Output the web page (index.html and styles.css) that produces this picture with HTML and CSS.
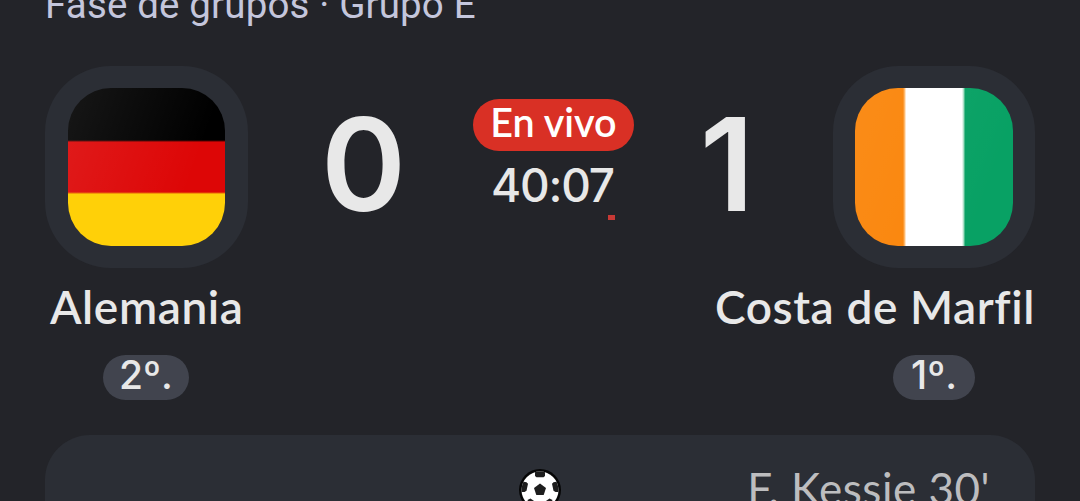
FILE: index.html
```
<!DOCTYPE html>
<html lang="es">
<head>
    <meta charset="UTF-8">
    <meta name="viewport" content="width=device-width, initial-scale=1.0">
    <title>Alemania - Costa de Marfil</title>
    <link rel="stylesheet" href="styles.css">
</head>
<body>
    <div class="stage"><span class="stage-text">Fase de grupos · Grupo E</span></div>
    <div class="match">
        <div class="flag-box"><div class="flag germany"></div></div>
        <div class="score home-score">0</div>
        <div class="status">
            <div class="live"><span class="live-text">En vivo</span></div>
            <div class="clock">40:07</div>
            <div class="tick"></div>
        </div>
        <div class="score away-score">1</div>
        <div class="flag-box"><div class="flag ivory"></div></div>
    </div>
    <div class="names">
        <span class="name home-name">Alemania</span>
        <span class="name away-name">Costa de Marfil</span>
    </div>
    <div class="ranks">
        <div class="rank-slot"><div class="rank home-rank">2º.</div></div>
        <div class="rank-slot"><div class="rank away-rank">1º.</div></div>
    </div>
    <div class="goals">
        <div class="home-goals"></div>
        <svg class="ball" viewBox="0 0 42 42">
            <clipPath id="ball-clip"><circle cx="21" cy="21" r="18.5"/></clipPath>
            <circle cx="21" cy="21" r="21" fill="#050505"/>
            <circle cx="21" cy="21" r="18.5" fill="#fff"/>
            <g fill="#1d1d1d" clip-path="url(#ball-clip)">
                <path d="M21 14.5l6 4.4-2.3 7.1h-7.4L15 18.9z"/>
                <path d="M16 1h10v6l-1.5 1.2h-7L16 7z"/>
                <path d="M1 12l6.5 1.2L9 14.7l-1.5 7-2 1.3H1z"/>
                <path d="M41 12l-6.5 1.2-1.5 1.5 1.5 7 2 1.3H41z"/>
                <path d="M8.5 31l3-1.5 5 3.5-.5 3-4 4z"/>
                <path d="M33.5 31l-3-1.5-5 3.5.5 3 4 4z"/>
            </g>
        </svg>
        <div class="away-goals"><span class="goal">F. Kessie 30'</span></div>
    </div>
</body>
</html>
```
FILE: styles.css
```
* {
    box-sizing: border-box;
}
body {
    display: flow-root;
    margin: 0;
    padding: 0 45px;
    height: 501px;
    overflow: hidden;
    background-color: #232429;
    color: #e8e8e8;
    font-family: Lato, "Open Sans", sans-serif;
    white-space: nowrap;
}
.stage {
    display: flow-root;
    height: 66px;
}
.stage-text {
    display: block;
    margin-top: -18px;
    font: 400 38.5px/46px Roboto, sans-serif;
    letter-spacing: 0.15px;
    color: #c4c6dc;
}
.match {
    display: grid;
    grid-template-columns: 203px 225px 161px 199px 202px;
    height: 202px;
}
.flag-box {
    height: 202px;
    padding: 22px 22px 22px 23px;
    border-radius: 66px;
    background-color: #2b2e35;
}
.flag {
    width: 158px;
    height: 158px;
    border-radius: 43px;
}
.germany {
    width: 157px;
    background: linear-gradient(110deg, rgba(255, 255, 255, 0.09), rgba(255, 255, 255, 0) 80%) 0 0 / 100% 105px no-repeat,
        linear-gradient(#000 0 52px, #500 53px, #dd0606 54px 104px, #e86004 105px, #ffd008 106px);
}
.ivory {
    margin-left: -1px;
    background: linear-gradient(110deg, rgba(255, 255, 255, 0.06), rgba(255, 255, 255, 0) 80%),
        linear-gradient(90deg, #fa850a 0 48px, #ffc687 50px, #fff 51px 107px, #8fd5b5 109px, #08a164 110px);
}
.score {
    font: 600 129px/196px Inter, sans-serif;
    text-align: center;
}
.home-score {
    padding-left: 6px;
}
.away-score {
    padding-right: 13px;
}
.status {
    display: flex;
    flex-direction: column;
    align-items: center;
    padding-top: 33px;
}
.live {
    width: 161px;
    height: 52px;
    border-radius: 26px;
    background-color: #d93025;
    color: #fff;
    font-size: 39.5px;
    font-weight: 600;
    line-height: 45px;
    text-align: center;
}
.clock {
    margin-top: 7px;
    height: 54px;
    padding-right: 2px;
    font: 500 46px/54px Inter, sans-serif;
    letter-spacing: -1.2px;
}
.tick {
    width: 7px;
    height: 5px;
    margin: 3px 19px 0 auto;
    background-color: #c73935;
}
.names {
    display: flex;
    justify-content: space-between;
    height: 87px;
    padding-top: 9px;
    font-size: 46px;
    font-weight: 600;
    line-height: 60px;
    letter-spacing: 0.6px;
}
.home-name {
    padding-left: 5px;
}
.ranks {
    display: flex;
    justify-content: space-between;
    height: 80px;
}
.rank-slot {
    display: flex;
    justify-content: center;
    width: 202px;
}
.rank {
    width: 86px;
    height: 45px;
    border-radius: 23px;
    background-color: #41444e;
    font: 500 39px/39px Inter, sans-serif;
    text-align: center;
}
.away-rank {
    width: 82px;
}
.goals {
    display: grid;
    grid-template-columns: 1fr 42px 1fr;
    height: 90px;
    padding: 34px 45px 0;
    border-radius: 45px 45px 0 0;
    background-color: #2b2e35;
}
.ball {
    width: 42px;
    height: 42px;
}
.away-goals {
    text-align: right;
    font-size: 44px;
    line-height: 39px;
    letter-spacing: 0.5px;
    color: #bdbdbf;
}
```
